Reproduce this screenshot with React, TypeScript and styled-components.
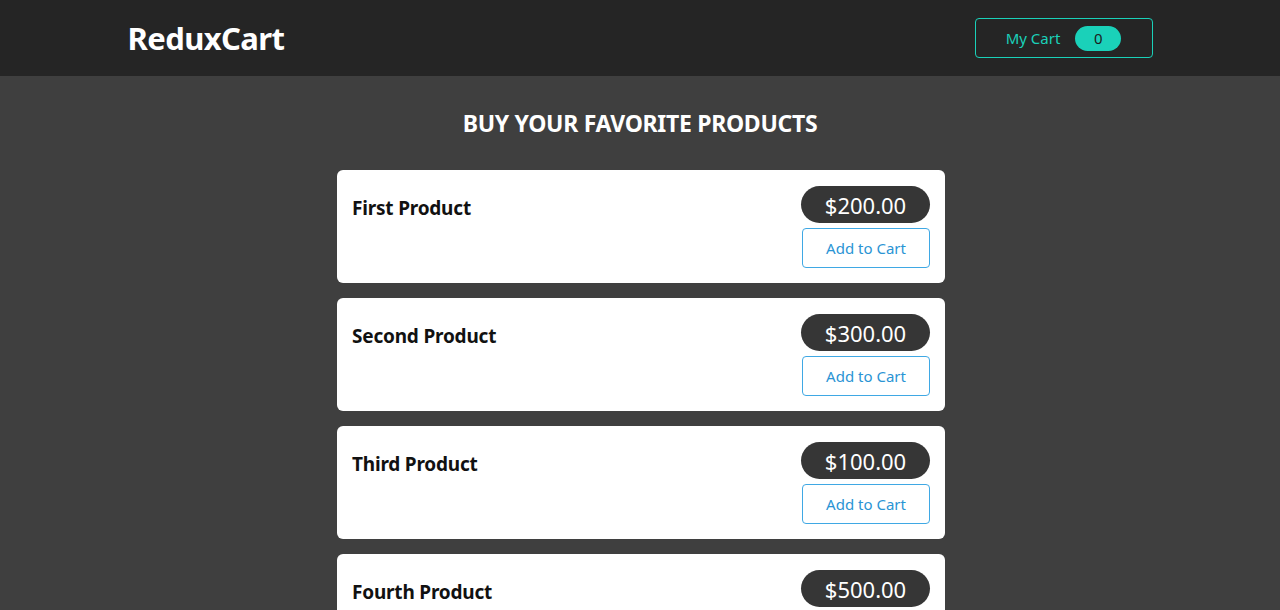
import styled, { createGlobalStyle } from 'styled-components'

const GlobalStyle = createGlobalStyle`
  * {
    box-sizing: border-box;
  }
  body {
    margin: 0;
    background: #3f3f3f;
    font-family: 'Noto Sans', 'Open Sans', sans-serif;
  }
`

const Header = styled.header`
  height: 76px;
  background: #252525;
`

const HeaderInner = styled.div`
  width: 1025px;
  height: 100%;
  margin: 0 auto;
  display: flex;
  align-items: center;
  justify-content: space-between;
`

const Logo = styled.h1`
  margin: 0;
  color: #fff;
  font-size: 31px;
  font-weight: 700;
  letter-spacing: -0.6px;
`

const CartButton = styled.button`
  all: unset;
  box-sizing: border-box;
  width: 178px;
  height: 40px;
  border: 1px solid #1ad1b9;
  border-radius: 4px;
  display: flex;
  align-items: center;
  justify-content: center;
  column-gap: 15px;
  color: #1ad1b9;
  font-size: 15px;
  cursor: pointer;
`

const CartBadge = styled.span`
  width: 46px;
  height: 25px;
  border-radius: 999px;
  background: #1ad1b9;
  color: #1c1c1c;
  display: flex;
  align-items: center;
  justify-content: center;
  font-size: 15px;
`

const Main = styled.main`
  display: flex;
  flex-direction: column;
  align-items: center;
  padding-top: 31px;
`

const Title = styled.h2`
  margin: 0 0 31px;
  color: #fff;
  font-size: 23px;
  font-weight: 700;
  text-transform: uppercase;
  letter-spacing: -0.3px;
`

const List = styled.ul`
  list-style: none;
  margin: 0 0 0 2px;
  padding: 0;
  width: 608px;
  display: flex;
  flex-direction: column;
  row-gap: 15px;
`

const Card = styled.li`
  background: #fff;
  border-radius: 6px;
  padding: 16px 15px 15px;
  display: flex;
  justify-content: space-between;
`

const ProductName = styled.h3`
  margin: 0;
  padding-top: 9px;
  font-size: 19px;
  font-weight: 700;
  color: #111;
  letter-spacing: -0.2px;
`

const Actions = styled.div`
  display: flex;
  flex-direction: column;
  align-items: flex-end;
  row-gap: 5px;
`

const Price = styled.span`
  width: 129px;
  height: 37px;
  border-radius: 999px;
  background: #363636;
  color: #fff;
  font-size: 22px;
  display: flex;
  align-items: center;
  justify-content: center;
`

const AddButton = styled.button`
  all: unset;
  box-sizing: border-box;
  width: 128px;
  height: 40px;
  border: 1px solid #3fa8e4;
  border-radius: 4px;
  color: #2a94d4;
  font-size: 15px;
  display: flex;
  align-items: center;
  justify-content: center;
  cursor: pointer;
`

const products = [
  { name: 'First Product', price: 200 },
  { name: 'Second Product', price: 300 },
  { name: 'Third Product', price: 100 },
  { name: 'Fourth Product', price: 500 },
]

function App() {
  return (
    <>
      <GlobalStyle />
      <Header>
        <HeaderInner>
          <Logo>ReduxCart</Logo>
          <CartButton>
            <span>My Cart</span>
            <CartBadge>0</CartBadge>
          </CartButton>
        </HeaderInner>
      </Header>
      <Main>
        <Title>Buy your favorite products</Title>
        <List>
          {products.map((p) => (
            <Card key={p.name}>
              <ProductName>{p.name}</ProductName>
              <Actions>
                <Price>${p.price.toFixed(2)}</Price>
                <AddButton>Add to Cart</AddButton>
              </Actions>
            </Card>
          ))}
        </List>
      </Main>
    </>
  )
}

export default App
